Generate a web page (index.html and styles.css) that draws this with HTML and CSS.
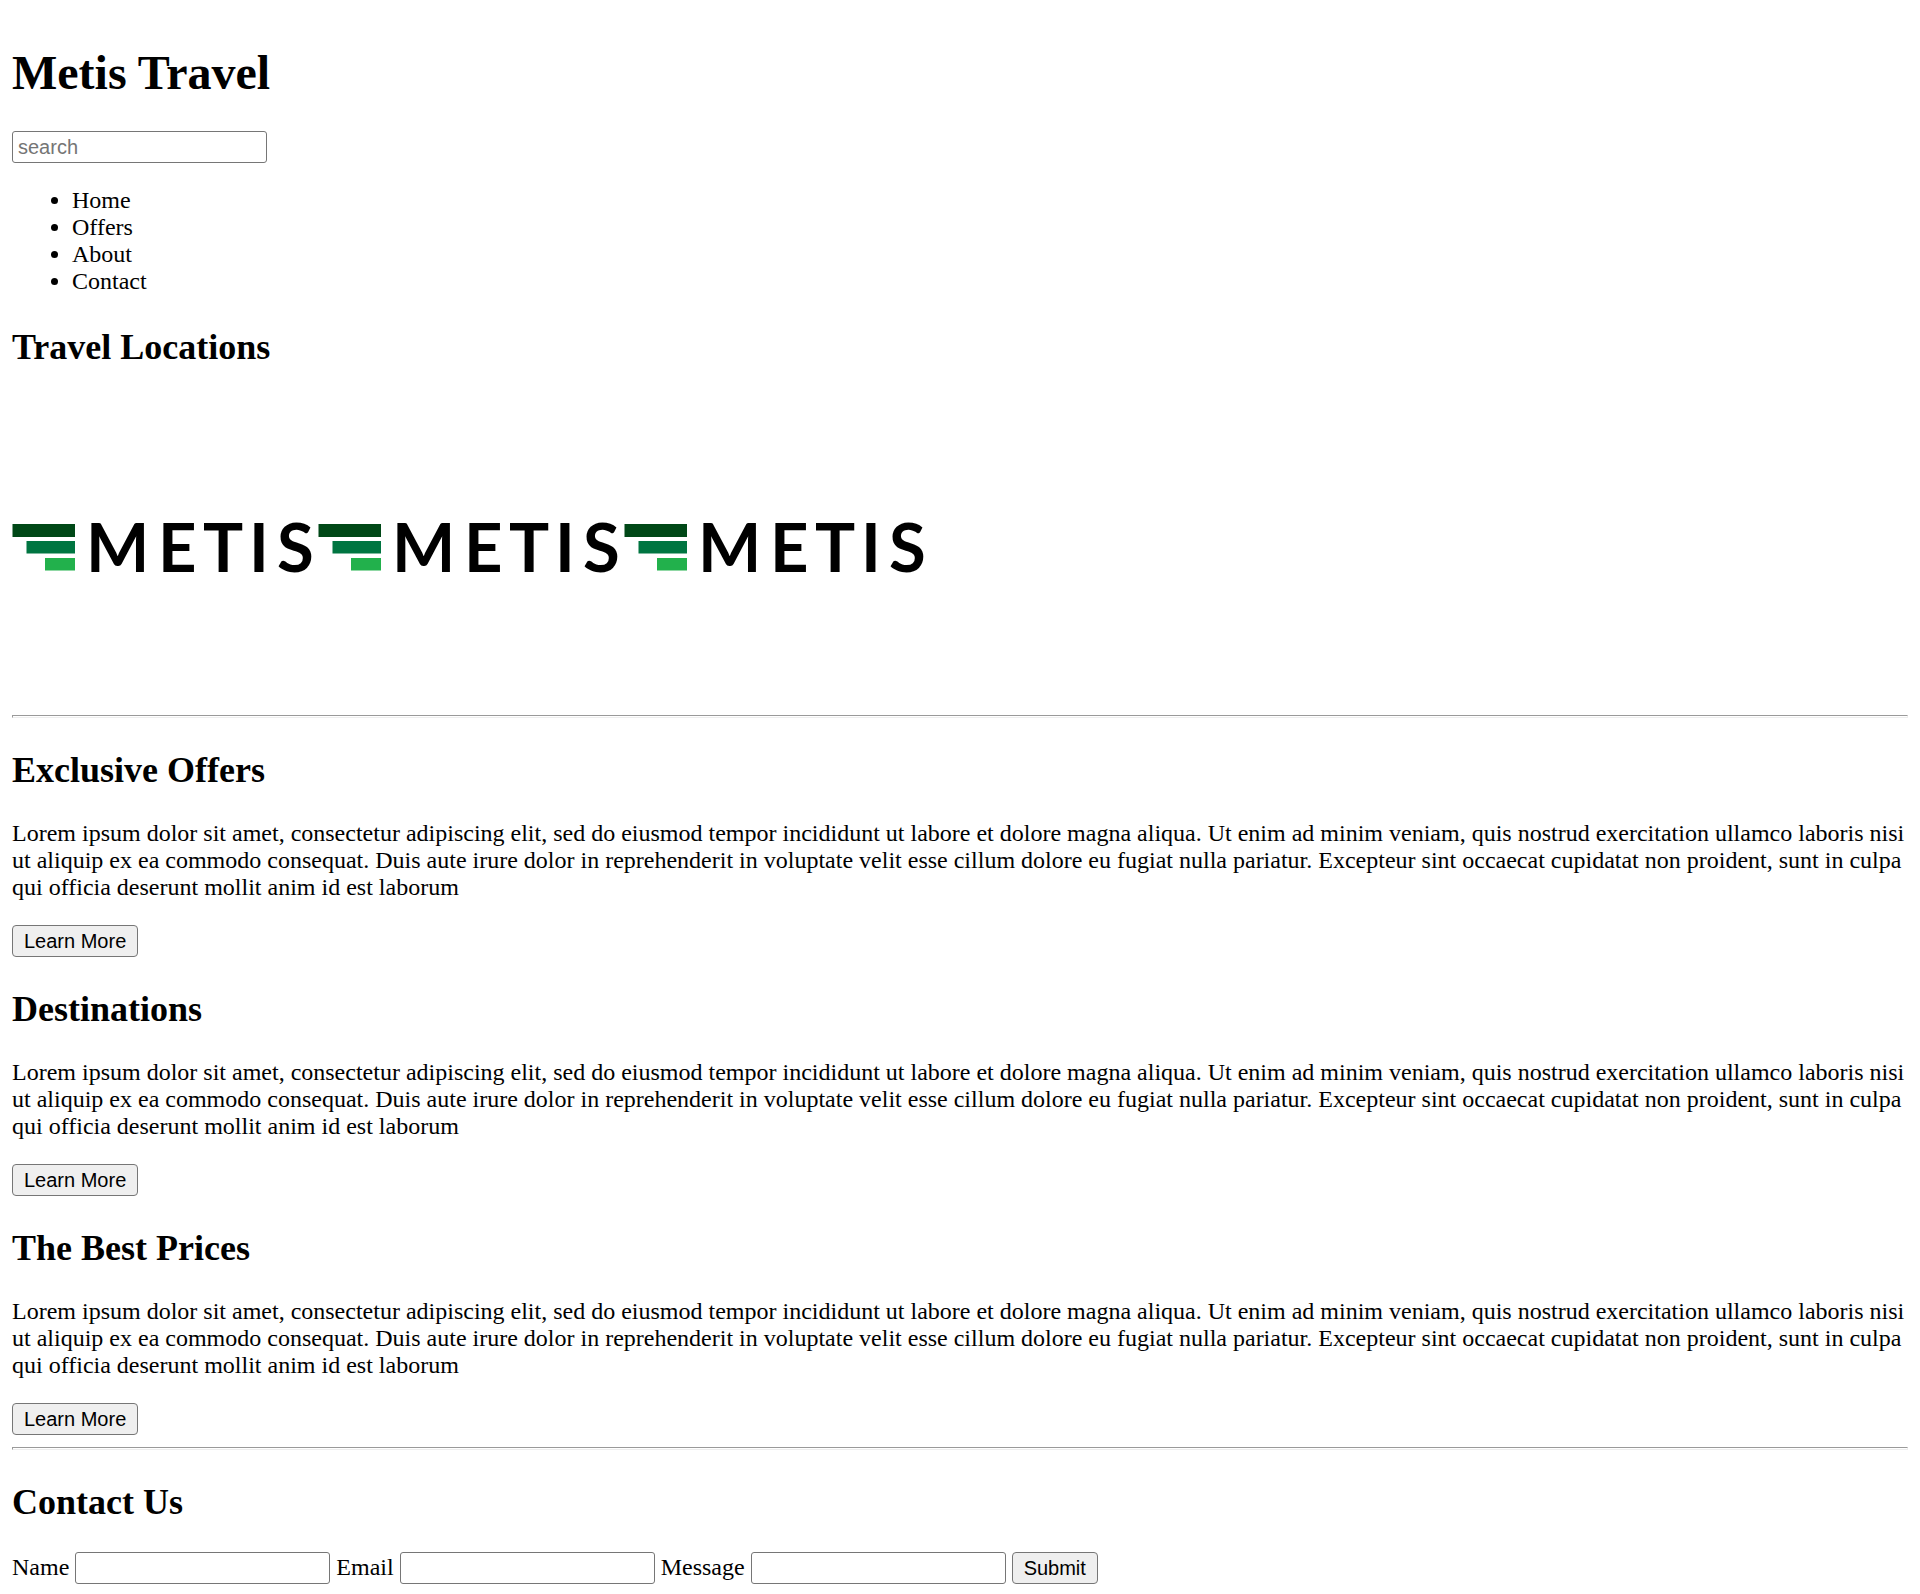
FILE: index.html
```html
<!DOCTYPE html>
<html lang="en">
<head>
  <meta charset="utf-8">
  <title>Metis Travel</title>
  <link rel="stylesheet" href="styles.css">
</head>
<body class="page">
  <header>
    <h1 class="title">Metis Travel</h1>
    <input class="field" type="text" placeholder="search" aria-label="search">
    <nav>
      <ul class="menu">
        <li>Home</li>
        <li>Offers</li>
        <li>About</li>
        <li>Contact</li>
      </ul>
    </nav>
  </header>

  <main>
    <section>
      <h2 class="heading">Travel Locations</h2>
      <div class="gallery">
        <svg class="logo" viewBox="0 0 306 306" role="img" aria-label="Metis">
          <rect x="0.500" y="127" width="62.500" height="13" fill="#004817"/>
          <rect x="14.500" y="144" width="48.500" height="12.500" fill="#007541"/>
          <rect x="33" y="161" width="30" height="12.500" fill="#22b14c"/>
          <text class="wordmark" x="74 146 191 237 265" y="175">METIS</text>
        </svg>
        <svg class="logo" viewBox="0 0 306 306" role="img" aria-label="Metis">
          <rect x="0.500" y="127" width="62.500" height="13" fill="#004817"/>
          <rect x="14.500" y="144" width="48.500" height="12.500" fill="#007541"/>
          <rect x="33" y="161" width="30" height="12.500" fill="#22b14c"/>
          <text class="wordmark" x="74 146 191 237 265" y="175">METIS</text>
        </svg>
        <svg class="logo" viewBox="0 0 306 306" role="img" aria-label="Metis">
          <rect x="0.500" y="127" width="62.500" height="13" fill="#004817"/>
          <rect x="14.500" y="144" width="48.500" height="12.500" fill="#007541"/>
          <rect x="33" y="161" width="30" height="12.500" fill="#22b14c"/>
          <text class="wordmark" x="74 146 191 237 265" y="175">METIS</text>
        </svg>
      </div>
    </section>

    <hr class="rule">

    <section>
      <h2 class="heading">Exclusive Offers</h2>
      <p class="copy">Lorem ipsum dolor sit amet, consectetur adipiscing elit, sed do eiusmod tempor incididunt ut labore et dolore magna aliqua. Ut enim ad minim veniam, quis nostrud exercitation ullamco laboris nisi ut aliquip ex ea commodo consequat. Duis aute irure dolor in reprehenderit in voluptate velit esse cillum dolore eu fugiat nulla pariatur. Excepteur sint occaecat cupidatat non proident, sunt in culpa qui officia deserunt mollit anim id est laborum</p>
      <button class="button" type="button">Learn More</button>
    </section>

    <section>
      <h2 class="heading">Destinations</h2>
      <p class="copy">Lorem ipsum dolor sit amet, consectetur adipiscing elit, sed do eiusmod tempor incididunt ut labore et dolore magna aliqua. Ut enim ad minim veniam, quis nostrud exercitation ullamco laboris nisi ut aliquip ex ea commodo consequat. Duis aute irure dolor in reprehenderit in voluptate velit esse cillum dolore eu fugiat nulla pariatur. Excepteur sint occaecat cupidatat non proident, sunt in culpa qui officia deserunt mollit anim id est laborum</p>
      <button class="button" type="button">Learn More</button>
    </section>

    <section>
      <h2 class="heading">The Best Prices</h2>
      <p class="copy">Lorem ipsum dolor sit amet, consectetur adipiscing elit, sed do eiusmod tempor incididunt ut labore et dolore magna aliqua. Ut enim ad minim veniam, quis nostrud exercitation ullamco laboris nisi ut aliquip ex ea commodo consequat. Duis aute irure dolor in reprehenderit in voluptate velit esse cillum dolore eu fugiat nulla pariatur. Excepteur sint occaecat cupidatat non proident, sunt in culpa qui officia deserunt mollit anim id est laborum</p>
      <button class="button" type="button">Learn More</button>
    </section>

    <hr class="rule">

    <section>
      <h2 class="heading">Contact Us</h2>
      <form>
        <label for="name">Name</label>
        <input class="field" type="text" id="name">
        <label for="email">Email</label>
        <input class="field" type="text" id="email">
        <label for="message">Message</label>
        <input class="field" type="text" id="message">
        <button class="button" type="button">Submit</button>
      </form>
    </section>
  </main>
</body>
</html>
```

FILE: styles.css
```css
.page {
  margin: 0;
  padding: 12px 12px 8px;
  background: #fff;
  color: #000;
  font-family: "Liberation Serif", "Times New Roman", serif;
  font-size: 24px;
  line-height: 27px;
}

.title {
  margin: 33px 0 31px;
  font-size: 48px;
  line-height: 55px;
}

.heading {
  margin: 31px 0 29px;
  font-size: 36px;
  line-height: 42px;
}

.menu {
  margin: 24px 0;
  padding-left: 60px;
}

.copy {
  margin: 24px 0;
}

.gallery {
  display: flex;
}

.logo {
  width: 306px;
  height: 306px;
}

.wordmark {
  font-family: Lato, sans-serif;
  font-size: 67px;
  font-weight: 700;
}

.rule {
  margin: 12px 0;
  height: 1px;
  border: 1px solid;
  border-color: #9a9a9a #eee #eee #9a9a9a;
}

.field,
.button {
  box-sizing: border-box;
  height: 32px;
  border: 1px solid #767676;
  font-family: "Liberation Sans", Arial, sans-serif;
  font-size: 20px;
}

.field {
  width: 255px;
  padding: 0 5px;
  border-radius: 3px;
  background: #fff;
}

.field::placeholder {
  color: #757575;
}

.button {
  padding: 0 11px;
  border-radius: 4px;
  background: #efefef;
  color: #000;
}
```
